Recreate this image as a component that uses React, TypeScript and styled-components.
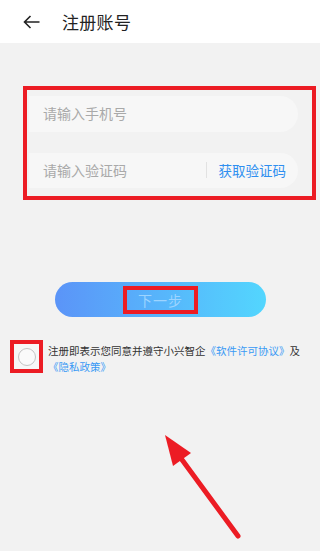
import styled, { createGlobalStyle } from "styled-components";

const GlobalStyle = createGlobalStyle`
  html, body {
    margin: 0;
    padding: 0;
    background: #f2f2f2;
  }
  body {
    font-family: "Noto Sans CJK SC", "Noto Sans", sans-serif;
  }
`;

const Page = styled.div`
  position: relative;
  width: 320px;
  height: 551px;
  overflow: hidden;
  background: #f2f2f2;
  display: flex;
  flex-direction: column;
`;

const Header = styled.div`
  height: 43px;
  background: #ffffff;
  display: flex;
  align-items: center;
  padding-left: 23px;
  gap: 22px;
  box-sizing: border-box;
`;

const BackButton = styled.div`
  width: 17px;
  height: 14px;
  display: flex;
  align-items: center;
`;

const Title = styled.h1`
  margin: 0;
  font-size: 17px;
  font-weight: 400;
  color: #222;
  letter-spacing: 0.3px;
`;

const Mark = styled.div`
  border: 4px solid #ec1c24;
  box-sizing: border-box;
`;

const FormBox = styled(Mark)`
  margin: 43px 0 0 23px;
  width: 293px;
  padding: 6px 14px 8px 2px;
  display: flex;
  flex-direction: column;
  gap: 21px;
`;

const Field = styled.div<{ $h: number }>`
  height: ${(p) => p.$h}px;
  background: #f7f7f7;
  border-radius: 0 18px 18px 0;
  display: flex;
  align-items: center;
  padding-left: 14px;
  padding-bottom: 2px;
  box-sizing: border-box;
`;

const Placeholder = styled.span`
  flex: 1;
  font-size: 14px;
  color: #a9a9a9;
`;

const Divider = styled.span`
  width: 1px;
  height: 16px;
  background: #e2e2e2;
  margin-right: 12px;
`;

const CodeLink = styled.span`
  font-size: 13.5px;
  color: #2f8ff0;
  margin-right: 12px;
`;

const NextButton = styled.div`
  margin: 82px 0 0 55px;
  width: 211px;
  height: 35px;
  border-radius: 18px;
  background: linear-gradient(90deg, #5b94f8 0%, #53d6fe 100%);
  display: flex;
  align-items: center;
  justify-content: center;
`;

const NextLabel = styled(Mark)`
  width: 75px;
  height: 28px;
  display: flex;
  align-items: center;
  justify-content: center;
  font-size: 14px;
  color: #9dd4ff;
  letter-spacing: 1px;
`;

const AgreeRow = styled.div`
  margin: 23px 0 0 10px;
  display: flex;
  align-items: flex-start;
  gap: 5px;
`;

const CheckMark = styled(Mark)`
  width: 33px;
  height: 33px;
  flex-shrink: 0;
  display: flex;
  align-items: center;
  justify-content: center;
  background: #f7f7f7;
`;

const Circle = styled.span`
  width: 16px;
  height: 16px;
  border-radius: 50%;
  border: 1.5px solid #c4c4c4;
  background: #fafafa;
`;

const AgreeText = styled.p`
  margin: 3px 0 0;
  width: 260px;
  font-size: 10.5px;
  line-height: 16px;
  color: #333;
`;

const Link = styled.span`
  color: #3a9af5;
`;

const Annotation = styled.svg`
  position: absolute;
  left: 0;
  top: 0;
  pointer-events: none;
`;

export default function App() {
  return (
    <Page>
      <GlobalStyle />
      <Header>
        <BackButton>
          <svg width="17" height="14" viewBox="0 0 17 14">
            <path d="M16.5 7H1.5M7.5 1L1.5 7l6 6" fill="none" stroke="#222" strokeWidth="1.6" />
          </svg>
        </BackButton>
        <Title>注册账号</Title>
      </Header>
      <FormBox>
        <Field $h={36}>
          <Placeholder>请输入手机号</Placeholder>
        </Field>
        <Field $h={35}>
          <Placeholder>请输入验证码</Placeholder>
          <Divider />
          <CodeLink>获取验证码</CodeLink>
        </Field>
      </FormBox>
      <NextButton>
        <NextLabel>下一步</NextLabel>
      </NextButton>
      <AgreeRow>
        <CheckMark>
          <Circle />
        </CheckMark>
        <AgreeText>
          注册即表示您同意并遵守小兴智企<Link>《软件许可协议》</Link>及
          <Link>《隐私政策》</Link>
        </AgreeText>
      </AgreeRow>
      <Annotation width="320" height="551" viewBox="0 0 320 551">
        <line x1="238" y1="536" x2="180" y2="457" stroke="#ec1c24" strokeWidth="5" strokeLinecap="round" />
        <polygon points="165,435 191,453 173,466" fill="#ec1c24" />
      </Annotation>
    </Page>
  );
}
